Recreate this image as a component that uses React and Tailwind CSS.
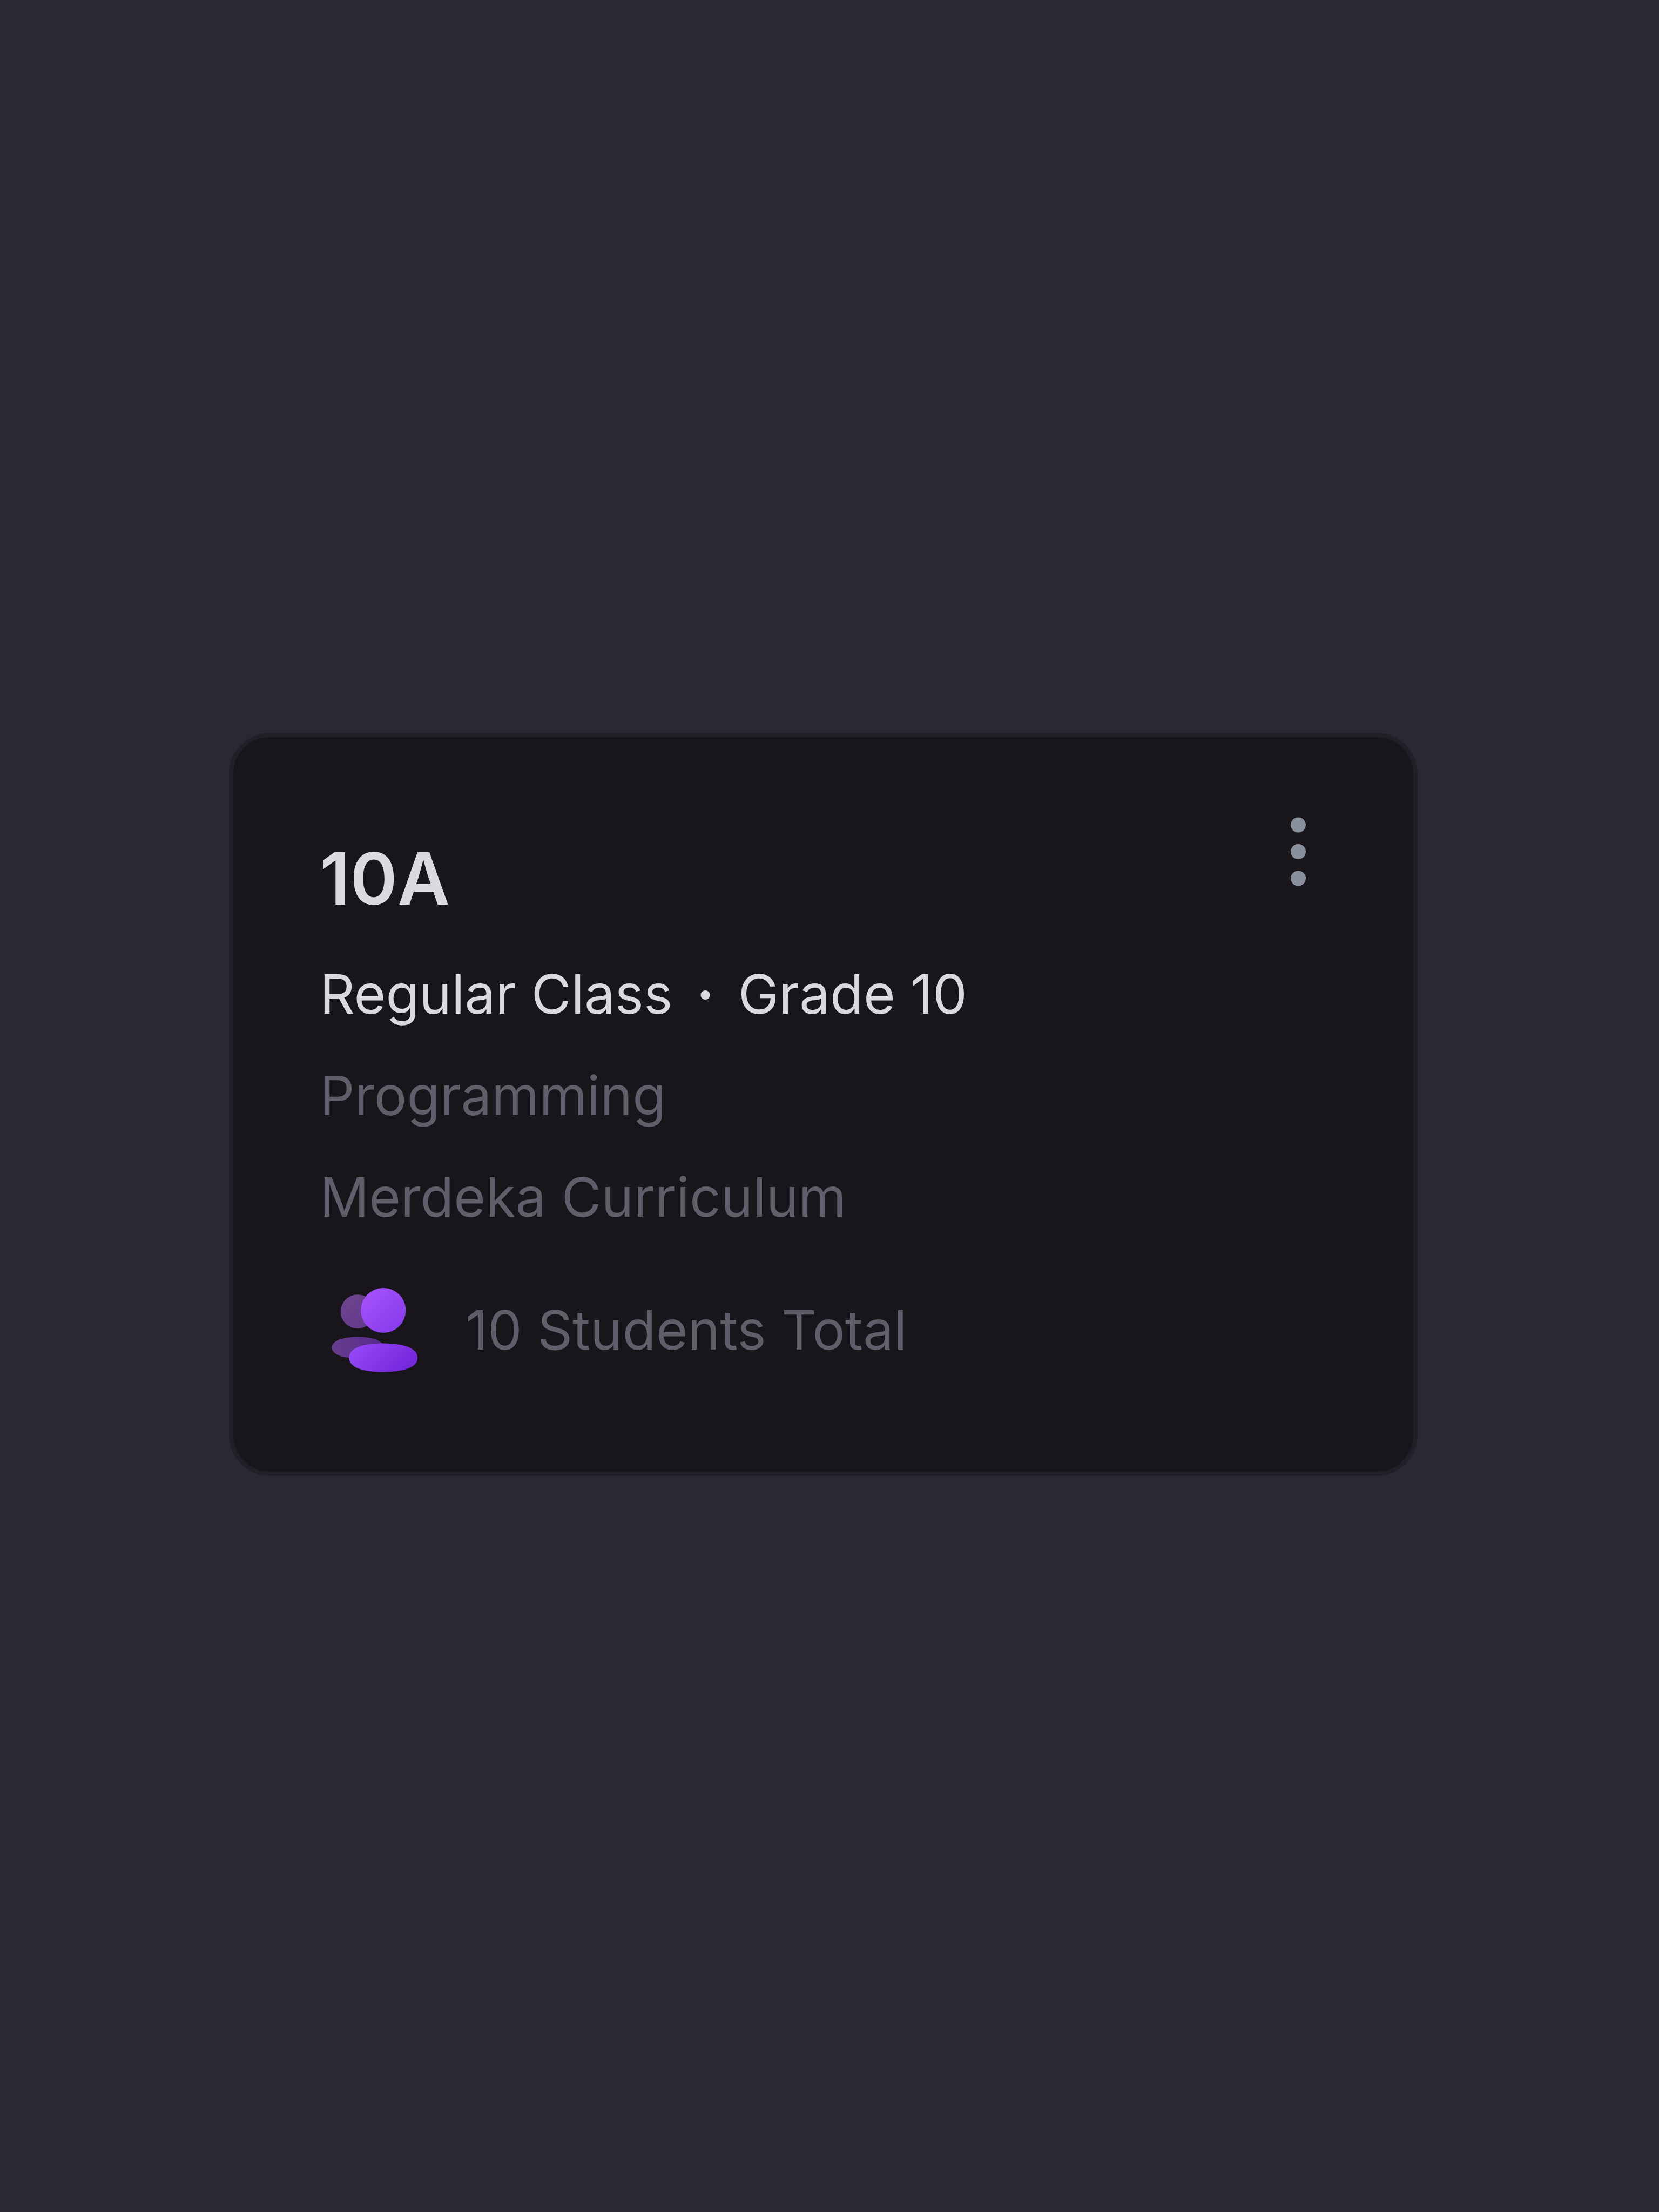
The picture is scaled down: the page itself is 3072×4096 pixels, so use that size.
import React from "react";

function StudentsIcon() {
  return (
    <svg className="w-[192px] h-[192px] shrink-0" viewBox="0 0 300 300" aria-hidden="true">
      <defs>
        <linearGradient id="head" x1="0" y1="0" x2="1" y2="1">
          <stop offset="0" stopColor="#a855ff" />
          <stop offset="1" stopColor="#8438e6" />
        </linearGradient>
        <linearGradient id="body" x1="0" y1="0" x2="1" y2="0.4">
          <stop offset="0" stopColor="#994cfa" />
          <stop offset="1" stopColor="#7628dc" />
        </linearGradient>
        <linearGradient id="backHead" x1="0" y1="0" x2="1" y2="1">
          <stop offset="0" stopColor="#6d468e" />
          <stop offset="1" stopColor="#62378a" />
        </linearGradient>
        <linearGradient id="backBody" x1="0" y1="0" x2="1" y2="0">
          <stop offset="0" stopColor="#673e8c" />
          <stop offset="1" stopColor="#552a8c" />
        </linearGradient>
      </defs>
      <circle cx="109.5" cy="98" r="49" fill="url(#backHead)" />
      <path d="M35 202c0-20 32-31 75-31s75 11 75 31-32 31-75 31-75-11-75-31z" fill="url(#backBody)" />
      <circle cx="184" cy="94.500" r="65" fill="url(#head)" />
      <path d="M85 231.500c0-29 42-41.500 99-41.500s99 12.500 99 41.500-42 41-99 41-99-12-99-41z" fill="url(#body)" />
    </svg>
  );
}

function MenuButton() {
  return (
    <button type="button" aria-label="Class options" className="shrink-0 cursor-pointer">
      <svg className="w-[106px] h-32 fill-[#87909b]" viewBox="0 0 106 128" aria-hidden="true">
        <circle cx="53" cy="14.500" r="14" />
        <circle cx="53" cy="64" r="14" />
        <circle cx="53" cy="113.500" r="14" />
      </svg>
    </button>
  );
}

function ClassCard({ name, type, grade, major, curriculum, students }) {
  return (
    <article className="w-full flex items-start justify-between rounded-[76px] border-8 border-[#221f27] bg-[#18151b] px-[160px] pt-[148px] pb-[167px]">
      <div className="flex flex-col gap-[60px] pt-[25px] text-[101px] leading-[128px] text-[#5e5f68]">
        <h2 className="text-[133px] leading-[178px] font-semibold text-[#dcd9e1]">{name}</h2>
        <p className="flex gap-11 text-[#dcd8e0]">
          <span>{type}</span>
          <span className="font-bold">·</span>
          <span>{grade}</span>
        </p>
        <p>{major}</p>
        <p>{curriculum}</p>
        <div className="mt-[26px] flex items-center gap-[78px]">
          <StudentsIcon />
          <p>{students} Students Total</p>
        </div>
      </div>
      <MenuButton />
    </article>
  );
}

export default function App() {
  return (
    <main className="min-h-screen flex items-center bg-[#2c2831] pl-[424px] pr-[447px] pb-1.5 font-[Inter,sans-serif]">
      <ClassCard
        name="10A"
        type="Regular Class"
        grade="Grade 10"
        major="Programming"
        curriculum="Merdeka Curriculum"
        students={10}
      />
    </main>
  );
}
